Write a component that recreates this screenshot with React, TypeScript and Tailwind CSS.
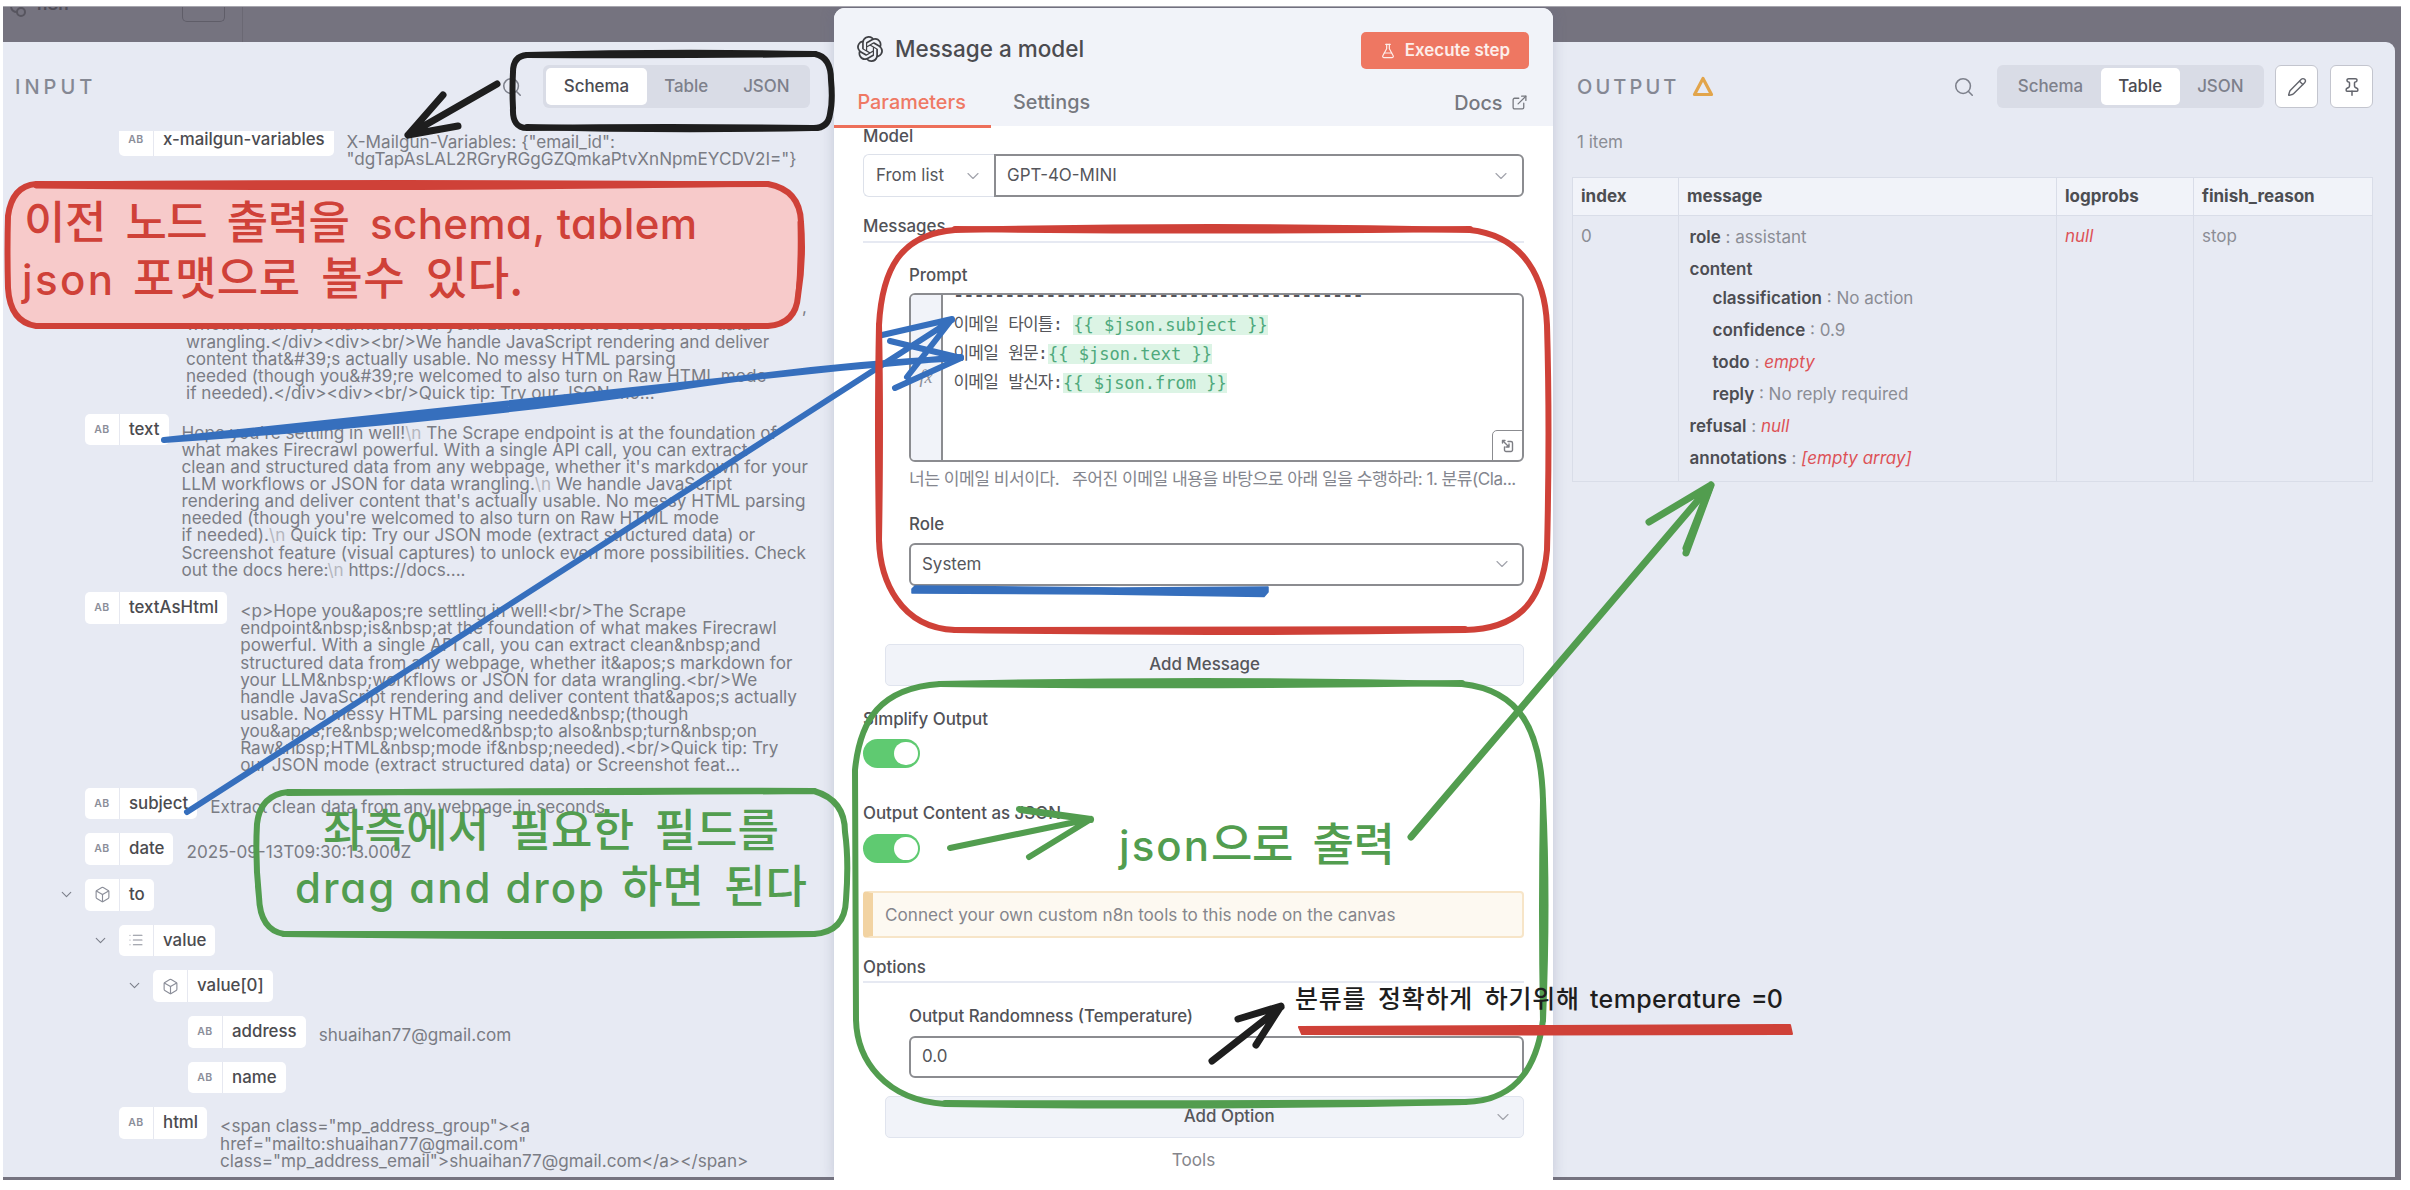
import type { ReactNode } from "react";
import { Box, ChevronDown, ExternalLink, FlaskConical, List, Pencil, Pin, Search } from "lucide-react";
import { SiOpenai } from "react-icons/si";

type Kind = "AB" | "box" | "list";

function Badge({ kind, name }: { kind: Kind; name: string }) {
  return (
    <div className="flex h-[31.5px] shrink-0 items-stretch rounded-[5px] bg-white">
      <div className="flex w-[35px] items-center justify-center border-r border-[#e6e8f0] text-[#8b8e99]">
        {kind === "AB" && <span className="text-[10.5px] font-semibold tracking-[0.4px]">AB</span>}
        {kind === "box" && <Box size={17} strokeWidth={1.6} />}
        {kind === "list" && <List size={16} strokeWidth={1.6} />}
      </div>
      <span className="pr-[9px] pl-[9px] text-[16.85px] leading-[31px] font-medium text-[#4b4b4f]">{name}</span>
    </div>
  );
}

function Row({ indent, kind, name, open, children }: { indent: string; kind: Kind; name: string; open?: boolean; children?: ReactNode }) {
  return (
    <div className={`mb-[14.2px] flex items-start ${indent}`}>
      {open && <ChevronDown size={17} strokeWidth={1.6} className="mt-[7px] mr-[10px] -ml-[27px] shrink-0 text-[#7c7f8a]" />}
      <Badge kind={kind} name={name} />
      {children && <div className="ml-[13px] pt-[10px] text-[17.14px] leading-[17.14px] whitespace-pre text-[#7a7c84]">{children}</div>}
    </div>
  );
}

function Nl() {
  return <span className="text-[#b4b6be]">\n </span>;
}

function Tabs({ active }: { active: string }) {
  return (
    <div className="flex h-[43px] items-center rounded-[6px] bg-[#d9dce6] px-[3px] text-[16.9px] font-medium">
      {["Schema", "Table", "JSON"].map((t) => (
        <div
          key={t}
          className={
            t === active
              ? "flex h-[37px] items-center rounded-[5px] bg-white px-[17.5px] text-[#4b4b52]"
              : "flex h-[37px] items-center px-[17.5px] text-[#7d808b]"
          }
        >
          {t}
        </div>
      ))}
    </div>
  );
}

function Label({ children, className }: { children: ReactNode; className: string }) {
  return <div className={`h-5 text-[16.9px] leading-5 font-medium text-[#515257] ${className}`}>{children}</div>;
}

function Toggle({ className }: { className: string }) {
  return (
    <div className={`flex h-[29px] w-[57px] items-center justify-end rounded-full bg-[#5fca71] pr-[2.5px] ${className}`}>
      <div className="size-[23.5px] rounded-full bg-white" />
    </div>
  );
}

function Chevron() {
  return <ChevronDown size={20} strokeWidth={1.4} className="text-[#a3a5ad]" />;
}

function PromptLine({ label, expr, gap }: { label: string; expr: string; gap?: boolean }) {
  return (
    <div className="flex h-[29px] items-center whitespace-pre">
      {label.split(" ").map((w, i) => (
        <span key={w}>
          {i > 0 && " "}
          <span className="tracking-[-0.84px]">{w}</span>
        </span>
      ))}
      <span>{gap ? ": " : ":"}</span>
      <span className="bg-[#dcf4e5] leading-[20px] text-[#4fa97c]">{expr}</span>
    </div>
  );
}

function InputPanel() {
  return (
    <section className="mt-[35px] flex h-[1135px] w-[831px] flex-col overflow-hidden bg-[#e7eaf3]">
      <header className="flex h-[89px] shrink-0 items-center pr-[24px] pl-[12px]">
        <h2 className="flex-1 text-[20px] font-medium tracking-[4px] text-[#858893]">INPUT</h2>
        <Search size={22} strokeWidth={1.7} className="mr-[20px] text-[#7d808b]" />
        <Tabs active="Schema" />
      </header>
      <div className="flex-1 overflow-hidden">
        <div className="-mt-[7px]">
          <Row indent="ml-[116px]" kind="AB" name="x-mailgun-variables">
            <div className="-mt-px">{'X-Mailgun-Variables: {"email_id":\n"dgTapAsLAL2RGryRGgGZQmkaPtvXnNpmEYCDV2I="}'}</div>
          </Row>
          <div className="mt-[131px] mb-[12.5px] ml-[183px] text-[17.14px] leading-[17.14px] whitespace-pre text-[#7a7c84]">
            <div className="w-[621px] text-right">,</div>
            {"whether it&#39;s markdown for your LLM workflows or JSON for data\nwrangling.</div><div><br/>We handle JavaScript rendering and deliver\ncontent that&#39;s actually usable. No messy HTML parsing\nneeded (though you&#39;re welcomed to also turn on Raw HTML mode\nif needed).</div><div><br/>Quick tip: Try our JSON mo..."}
          </div>
          <Row indent="ml-[82px]" kind="AB" name="text">
            Hope you're settling in well!<Nl />The Scrape endpoint is at the foundation of{"\n"}
            {"what makes Firecrawl powerful. With a single API call, you can extract\nclean and structured data from any webpage, whether it's markdown for your\nLLM workflows or JSON for data wrangling."}
            <Nl />
            {"We handle JavaScript\nrendering and deliver content that's actually usable. No messy HTML parsing\nneeded (though you're welcomed to also turn on Raw HTML mode\nif needed)."}
            <Nl />
            {"Quick tip: Try our JSON mode (extract structured data) or\nScreenshot feature (visual captures) to unlock even more possibilities. Check\nout the docs here:"}
            <Nl />
            https://docs....
          </Row>
          <Row indent="ml-[82px]" kind="AB" name="textAsHtml">
            {"<p>Hope you&apos;re settling in well!<br/>The Scrape\nendpoint&nbsp;is&nbsp;at the foundation of what makes Firecrawl\npowerful. With a single API call, you can extract clean&nbsp;and\nstructured data from any webpage, whether it&apos;s markdown for\nyour LLM&nbsp;workflows or JSON for data wrangling.<br/>We\nhandle JavaScript rendering and deliver content that&apos;s actually\nusable. No messy HTML parsing needed&nbsp;(though\nyou&apos;re&nbsp;welcomed&nbsp;to also&nbsp;turn&nbsp;on\nRaw&nbsp;HTML&nbsp;mode if&nbsp;needed).<br/>Quick tip: Try\nour JSON mode (extract structured data) or Screenshot feat..."}
          </Row>
          <Row indent="ml-[82px]" kind="AB" name="subject">Extract clean data from any webpage in seconds</Row>
          <Row indent="ml-[82px]" kind="AB" name="date">2025-09-13T09:30:13.000Z</Row>
          <Row indent="ml-[82px]" kind="box" name="to" open />
          <Row indent="ml-[116px]" kind="list" name="value" open />
          <Row indent="ml-[150px]" kind="box" name="value[0]" open />
          <Row indent="ml-[185px]" kind="AB" name="address">shuaihan77@gmail.com</Row>
          <Row indent="ml-[185px]" kind="AB" name="name" />
          <Row indent="ml-[116px]" kind="AB" name="html">
            {'<span class="mp_address_group"><a\nhref="mailto:shuaihan77@gmail.com"\nclass="mp_address_email">shuaihan77@gmail.com</a></span>'}
          </Row>
        </div>
      </div>
    </section>
  );
}

function NodePanel() {
  return (
    <section className="z-10 mt-px flex h-[1172px] w-[719px] flex-col rounded-t-[11px] bg-white shadow-[0_0_14px_rgba(90,95,130,0.25)]">
      <header className="flex h-[118px] shrink-0 flex-col rounded-t-[11px] bg-[#f1f3f9]">
        <div className="mt-[24px] flex h-[37px] items-center pr-[24px] pl-[23px]">
          <SiOpenai size={26} className="mt-[-3px] text-[#3f4045]" />
          <h1 className="mt-[-3px] ml-[12px] flex-1 text-[22.5px] font-medium text-[#4b4b50]">Message a model</h1>
          <button className="flex h-[37px] w-[168px] items-center justify-center gap-[9px] rounded-[5px] bg-[#ee7762] text-[16.9px] font-semibold text-[#fdeeea]">
            <FlaskConical size={16} strokeWidth={1.8} />
            Execute step
          </button>
        </div>
        <nav className="mt-[10px] flex flex-1 text-[19.8px] leading-[46px] font-medium text-[#76787f]">
          <span className="w-[157px] border-b-[3px] border-[#ed6f5a] pl-[23.5px] text-[#ef7864]">Parameters</span>
          <span className="ml-[22px] flex-1">Settings</span>
          <span className="mr-[25px] flex items-center gap-[8.5px] pb-[2px]">
            Docs
            <ExternalLink size={17} strokeWidth={1.8} />
          </span>
        </nav>
      </header>
      <div className="flex flex-1 flex-col pr-[29px] pl-[29px]">
        <Label className="">Model</Label>
        <div className="mt-[8px] flex h-[43px] text-[16.95px] text-[#55565b]">
          <div className="flex w-[131px] items-center justify-between rounded-l-[6px] border-y-[1.5px] border-l-[1.5px] border-[#dde1ea] pr-[11px] pl-[12px]">
            From list
            <Chevron />
          </div>
          <div className="flex flex-1 items-center justify-between rounded-r-[6px] border-2 border-[#8b8c90] pr-[11px] pl-[11px]">
            GPT-4O-MINI
            <Chevron />
          </div>
        </div>
        <Label className="mt-[19px]">Messages</Label>
        <div className="mt-[5px] h-[2px] shrink-0 bg-[#e6e9f2]" />
        <div className="flex flex-col pl-[46px]">
          <Label className="mt-[22px]">Prompt</Label>
          <div className="relative mt-[8px] flex h-[169px] overflow-hidden rounded-[6px] border-2 border-[#8b8c90] bg-white">
            <div className="flex w-[32px] items-center justify-center border-r-2 border-[#8b8c90] bg-[#f1f3f9] font-[Liberation_Serif] text-[18px] text-[#8a8d98] italic">fx</div>
            <div className="flex-1 pl-[10.5px] font-['DejaVu_Sans_Mono','Noto_Sans_CJK_KR',monospace] text-[17.03px] text-[#55565b]">
              <div className="mt-[-14px] h-[29px] leading-[29px] font-bold">{"-".repeat(40)}</div>
              <PromptLine label="이메일 타이틀" expr="{{ $json.subject }}" gap />
              <PromptLine label="이메일 원문" expr="{{ $json.text }}" />
              <PromptLine label="이메일 발신자" expr="{{ $json.from }}" />
            </div>
            <div className="absolute -right-px -bottom-px flex size-[31px] items-center justify-center rounded-tl-[5px] border-[1.5px] border-[#8b8c90] text-[#7d7e84]">
              <svg width="14" height="14" viewBox="0 0 14 14" fill="none" stroke="currentColor" strokeWidth="1.4" strokeLinecap="round" strokeLinejoin="round">
                <path d="M7 2.500h3A1.500 1.500 0 0 1 11.500 4V11A1.500 1.500 0 0 1 10 12.500H5A1.500 1.500 0 0 1 3.500 11V8M1.500 4V1.500H4M1.500 1.500l6.500 6.500M8 5v3H5" />
              </svg>
            </div>
          </div>
          <div className="mt-[7px] h-5 font-[Inter,'Noto_Sans_CJK_KR',sans-serif] text-[17.14px] leading-5 tracking-[-0.52px] whitespace-pre text-[#84868e]">너는 이메일 비서이다.   주어진 이메일 내용을 바탕으로 아래 일을 수행하라: 1. 분류(Cla...</div>
          <Label className="mt-[25px]">Role</Label>
          <div className="mt-[9px] flex h-[42.5px] items-center justify-between rounded-[6px] border-2 border-[#8b8c90] pr-[10.5px] pl-[11px] text-[16.95px] text-[#55565b]">
            System
            <Chevron />
          </div>
        </div>
        <button className="mt-[58px] ml-[22px] h-[42px] shrink-0 rounded-[5px] border-[1.5px] border-[#e0e4ee] bg-[#f1f3f9] text-[16.9px] font-medium text-[#55565b]">Add Message</button>
        <Label className="mt-[23.5px]">Simplify Output</Label>
        <Toggle className="mt-[10px]" />
        <Label className="mt-[35px]">Output Content as JSON</Label>
        <Toggle className="mt-[11px]" />
        <div className="mt-[28px] flex h-[47px] items-center rounded-[4px] border-2 border-l-[10px] border-[#f7e5c8] border-l-[#f2d3a2] bg-[#fdf9f1] pl-[12px] text-[17.14px] text-[#85868c]">
          Connect your own custom n8n tools to this node on the canvas
        </div>
        <Label className="mt-[19px]">Options</Label>
        <div className="mt-[4px] h-[2px] shrink-0 bg-[#e6e9f2]" />
        <div className="flex flex-col pl-[46px]">
          <Label className="mt-[23px]">Output Randomness (Temperature)</Label>
          <div className="mt-[10px] flex h-[42px] items-center rounded-[6px] border-2 border-[#8b8c90] pl-[11px] text-[16.95px] text-[#55565b]">0.0</div>
        </div>
        <div className="mt-[17.5px] ml-[22px] flex h-[42px] shrink-0 items-center rounded-[5px] border-[1.5px] border-[#e0e4ee] bg-[#f1f3f9] pr-[10.5px] text-[16.9px] font-medium text-[#55565b]">
          <span className="flex-1 pl-[80px] text-center">Add Option</span>
          <Chevron />
        </div>
        <div className="mt-[12.5px] h-5 text-center text-[17.14px] leading-5 text-[#85868c]">Tools</div>
      </div>
    </section>
  );
}

function Pair({ k, v, red }: { k: string; v: string; red?: boolean }) {
  return (
    <div className="h-[32px]">
      <b className="font-semibold text-[#4c4d52]">{k}</b> : {red ? <i className="text-[#dd5257]">{v}</i> : v}
    </div>
  );
}

function OutputPanel() {
  return (
    <section className="mt-[35px] flex h-[1135px] w-[842px] flex-col rounded-tr-[9px] bg-[#e7eaf3] pr-[22px] pl-[19px]">
      <header className="flex h-[89px] shrink-0 items-center pl-[5px]">
        <h2 className="text-[20px] font-medium tracking-[3.1px] text-[#858893]">OUTPUT</h2>
        <svg width="22" height="21" viewBox="0 0 22 21" fill="none" stroke="#e2a54b" strokeWidth="3.2" strokeLinejoin="round" className="ml-[12px]">
          <path d="M11 2.500L19.500 18.500H2.500Z" />
        </svg>
        <span className="flex-1" />
        <Search size={22} strokeWidth={1.7} className="mr-[22px] text-[#7d808b]" />
        <Tabs active="Table" />
        <div className="ml-[11px] flex h-[43px] w-[43px] items-center justify-center rounded-[6px] border-[1.5px] border-[#c3c5ce] bg-white text-[#63656d]">
          <Pencil size={20} strokeWidth={1.7} />
        </div>
        <div className="ml-[12px] flex h-[43px] w-[43px] items-center justify-center rounded-[6px] border-[1.5px] border-[#c3c5ce] bg-white text-[#63656d]">
          <Pin size={20} strokeWidth={1.8} />
        </div>
      </header>
      <div className="mt-px pl-[5px] text-[17px] leading-5 text-[#8b8d95]">1 item</div>
      <div className="mt-[25px] grid h-[305px] grid-cols-[106px_378px_137px_1fr] grid-rows-[38px_1fr] border-[1.5px] border-[#d9dde8] text-[17px] text-[#8b8d95]">
        {["index", "message", "logprobs", "finish_reason"].map((h) => (
          <div key={h} className="border-r-[1.5px] border-b-[1.5px] border-[#d9dde8] bg-[#f1f3f9] pl-[8px] leading-[36px] font-bold text-[#4c4d52] nth-[4]:border-r-0">
            {h}
          </div>
        ))}
        <div className="border-r-[1.5px] border-[#d9dde8] pt-[10px] pl-[8px] leading-5">0</div>
        <div className="border-r-[1.5px] border-[#d9dde8] pt-[10.5px] pl-[10.5px] leading-5">
          <Pair k="role" v="assistant" />
          <div className="h-[29.5px] font-semibold text-[#4c4d52]">content</div>
          <div className="pl-[23px]">
            <Pair k="classification" v="No action" />
            <Pair k="confidence" v="0.9" />
            <Pair k="todo" v="empty" red />
            <Pair k="reply" v="No reply required" />
          </div>
          <Pair k="refusal" v="null" red />
          <Pair k="annotations" v="[empty array]" red />
        </div>
        <div className="border-r-[1.5px] border-[#d9dde8] pt-[10px] pl-[8px] leading-5 text-[#dd5257] italic">null</div>
        <div className="pt-[10px] pl-[8px] leading-5">stop</div>
      </div>
    </section>
  );
}

const RED = "#cf4138";
const GREEN = "#529d4f";
const BLUE = "#366fbd";
const INK = "#1e1e1e";

function Hand({ x, y, w, size, fill, latin, children }: { x: number; y: number; w: number; size: number; fill: string; latin?: boolean; children: string }) {
  return (
    <text
      x={x}
      y={y}
      textLength={w}
      lengthAdjust="spacing"
      fontSize={size}
      fill={fill}
      className={
        latin
          ? "font-[Inter,sans-serif] font-medium [font-feature-settings:'cv11']"
          : "font-['Noto_Sans_CJK_KR',sans-serif] font-medium [word-spacing:0.22em]"
      }
    >
      {children}
    </text>
  );
}

/** Hand-drawn notes laid over the editor. */
function Annotations() {
  return (
    <svg className="pointer-events-none absolute top-0 left-0 z-20" width="2410" height="1190" viewBox="0 0 2410 1190" fill="none" strokeLinecap="round" strokeLinejoin="round">
      <g stroke={INK} strokeWidth="6">
        <path d="M527 55Q670 51 815 54Q831 57 831 80Q833 101 830 114Q828 129 812 128Q670 126 527 128Q512 128 513 108Q512 90 513 72Q513 56 527 55Z" />
        <path d="M527 55Q670 56 815 54M812 128Q670 131 527 127" />
        <path d="M497 84L408 135M443 95L408 135L458 126" strokeWidth="7" />
      </g>

      <path d="M36 184Q400 186 768 184Q800 190 801 222Q804 260 798 296Q796 324 768 326Q400 325 36 326Q10 322 8 288Q7 250 8 216Q12 186 36 184Z" fill="#f7caca" stroke={RED} strokeWidth="6" />
      <path d="M36 184Q400 181 768 184M36 186Q400 190 768 184M800 222Q801 260 798 296" stroke={RED} strokeWidth="5" />

      <g stroke={BLUE} strokeWidth="6">
        <path d="M164 440L840 368M164 440Q480 418 700 384Q840 364 961 358M840 368L961 357" />
        <path d="M187 812L952 320M880 335.500L952 319L907 377M890 341L961 358L895 388" />
      </g>
      <path d="M915 586L1120 588L1268 587V592L1264 596.500L1100 594L912 593V589Z" fill={BLUE} stroke={BLUE} strokeWidth="1.500" />

      <g stroke={RED} strokeWidth="6">
        <path d="M955 230Q1210 224 1470 230C1525 236 1545 280 1547 325Q1550 430 1547 550C1542 605 1515 629 1465 630Q1210 634 955 630C900 628 880 580 879 540Q877 420 879 325C882 270 900 234 955 230Z" />
        <path d="M955 229Q1210 232 1470 229M955 630Q1210 630 1465 629M879 325Q881 420 879 540" />
      </g>

      <g stroke={GREEN} strokeWidth="6">
        <path d="M940 684Q1200 678 1462 684C1520 690 1541 730 1543 800Q1548 900 1543 1020C1536 1075 1510 1101 1465 1102Q1200 1108 945 1104C885 1100 857 1060 856 1020Q856 900 855 770C860 720 880 688 940 684Z" />
        <path d="M940 684Q1200 687 1462 683M945 1103Q1200 1104 1465 1102M1543 800Q1541 910 1543 1020" />
        <path d="M288 792Q560 793 814 791Q845 800 845 832Q849 860 846 900Q845 932 814 934Q560 938 284 934Q260 930 259 897Q255 860 257 824Q260 795 288 792Z" />
        <path d="M288 793Q560 790 814 791M284 934Q560 935 814 934" />
        <path d="M950 848L1090 819M1019 809L1091 819M1029 857L1091 819M1020 810L1091 820" />
        <path d="M1411 837L1711 485M1649 522L1711 485L1686 553" strokeWidth="7" />
        <path d="M1686 548L1710 487L1700 495" strokeWidth="7" />
      </g>

      <path d="M1212 1061L1281 1007M1238 1019L1281 1006L1256 1045" stroke={INK} strokeWidth="7" />
      <path d="M1299 1027L1550 1026L1790 1025L1792 1034L1540 1034.500L1302 1034Z" fill={RED} stroke={RED} strokeWidth="2" />

      <Hand x={24} y={239} w={326} size={45} fill={RED}>이전 노드 출력을</Hand>
      <Hand x={370} y={239} w={327} size={42} fill={RED} latin>schema, tablem</Hand>
      <Hand x={22} y={295} w={91} size={42} fill={RED} latin>json</Hand>
      <Hand x={133} y={295} w={390} size={45} fill={RED}>포맷으로 볼수 있다.</Hand>

      <Hand x={323} y={847} w={456} size={45} fill={GREEN}>좌측에서 필요한 필드를</Hand>
      <Hand x={295} y={903} w={309} size={42} fill={GREEN} latin>drag and drop</Hand>
      <Hand x={621} y={903} w={186} size={45} fill={GREEN}>하면 된다</Hand>

      <Hand x={1119} y={861} w={90} size={42} fill={GREEN} latin>json</Hand>
      <Hand x={1211} y={861} w={184} size={45} fill={GREEN}>으로 출력</Hand>

      <Hand x={1295} y={1008} w={284} size={25} fill={INK}>분류를 정확하게 하기위해</Hand>
      <Hand x={1590} y={1008} w={151} size={25} fill={INK} latin>temperature</Hand>
      <Hand x={1751} y={1008} w={32} size={25} fill={INK} latin>=0</Hand>
    </svg>
  );
}

export default function App() {
  return (
    <main className="relative h-[1190px] w-[2410px] overflow-hidden bg-white pt-[6px] pl-[3px] font-[Inter,'Noto_Sans_CJK_KR',sans-serif]">
      <div className="relative flex h-[1174px] w-[2398px] overflow-hidden border-t border-[#a7a6ae] bg-[#75737f]">
        <div className="absolute top-0 left-0 flex h-[35px] w-[831px] items-start">
          <svg width="22" height="12" viewBox="0 0 22 12" fill="none" stroke="#57555f" strokeWidth="2" className="ml-[2px]">
            <circle cx="16" cy="5" r="4" />
            <path d="M6 0q1 5 6 5" />
          </svg>
          <div className="h-[5px] w-[44px] overflow-hidden pl-[10px] text-[17px] font-semibold text-[#4f4d57]">
            <div className="-mt-[13px] leading-5">n8n</div>
          </div>
          <div className="ml-[111px] h-[15px] w-[43px] rounded-b-[5px] border-x border-b border-[#5f5d68]" />
          <div className="ml-[17px] h-full border-l border-[#6a6873]" />
        </div>
        <InputPanel />
        <NodePanel />
        <OutputPanel />
      </div>
      <Annotations />
    </main>
  );
}
